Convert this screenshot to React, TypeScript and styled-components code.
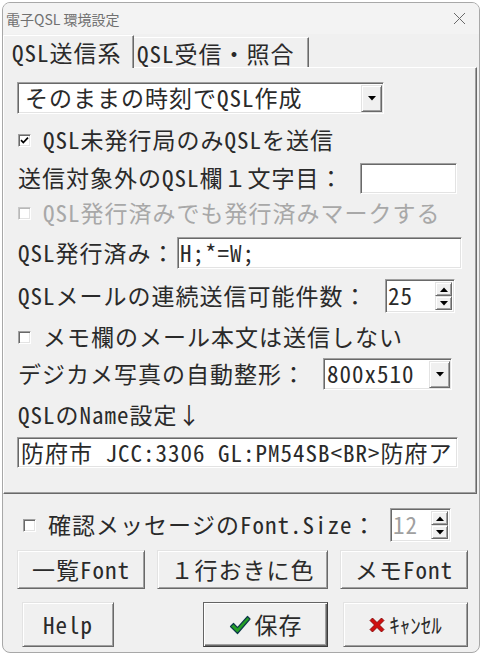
import React from "react";
import styled, { createGlobalStyle } from "styled-components";

const FONT = `"Noto Sans Mono CJK JP", "Noto Sans CJK JP", "Liberation Mono", monospace`;

const GlobalStyle = createGlobalStyle`
  html, body {
    margin: 0;
    padding: 0;
    background: #ffffff;
  }
  body {
    font-family: ${FONT};
  }
`;

const Window = styled.div`
  margin: 2px 0 0 2px;
  width: 478px;
  height: 651px;
  box-sizing: border-box;
  border: 1px solid #a8a8a8;
  border-radius: 8px;
  background: #f0f0f0;
  overflow: hidden;
  display: flex;
  flex-direction: column;
`;

const TitleBar = styled.div`
  height: 31px;
  display: flex;
  align-items: center;
  justify-content: space-between;
  padding: 0 13px 0 3px;
  background: #f3f3f3;
  font-family: "Noto Sans CJK JP", sans-serif;
  font-size: 14px;
  color: #707070;
`;

const TabStrip = styled.div`
  height: 33px;
  display: flex;
  align-items: flex-end;
  position: relative;
  z-index: 1;
`;

const Tab = styled.div<{ $active?: boolean; $w: number; $pl: number }>`
  box-sizing: border-box;
  width: ${(p) => p.$w}px;
  height: ${(p) => (p.$active ? 33 : 30)}px;
  margin-bottom: ${(p) => (p.$active ? -1 : 0)}px;
  padding-left: ${(p) => p.$pl}px;
  display: flex;
  align-items: center;
  font-size: 23px;
  letter-spacing: 1px;
  color: #2a2a2a;
  background: #f0f0f0;
  border-top: 1px solid #ffffff;
  border-left: ${(p) => (p.$active ? "1px solid #ffffff" : "none")};
  border-right: 1px solid #696969;
  box-shadow: inset -1px 0 0 #a0a0a0;
  white-space: nowrap;
`;

const Panel = styled.div`
  box-sizing: border-box;
  width: 474px;
  height: 427px;
  border-top: 1px solid #ffffff;
  border-left: 1px solid #ffffff;
  border-right: 1px solid #696969;
  border-bottom: 1px solid #696969;
  box-shadow: inset -1px -1px 0 #a0a0a0;
  padding-left: 13px;
  display: flex;
  flex-direction: column;
`;

const Row = styled.div<{ $top: number; $h: number; $w?: number }>`
  display: flex;
  align-items: center;
  margin-top: ${(p) => p.$top}px;
  height: ${(p) => p.$h}px;
  width: ${(p) => (p.$w ? `${p.$w}px` : "auto")};
  flex-shrink: 0;
`;

const Label = styled.span<{ $disabled?: boolean; $ml?: number }>`
  font-size: 23px;
  letter-spacing: 1px;
  line-height: 1.3;
  margin-left: ${(p) => p.$ml ?? 1}px;
  color: ${(p) => (p.$disabled ? "#a8a8a8" : "#2a2a2a")};
  white-space: nowrap;
`;

const Field = styled.div<{ $w: number; $h: number; $auto?: boolean }>`
  box-sizing: border-box;
  width: ${(p) => p.$w}px;
  height: ${(p) => p.$h}px;
  margin-left: ${(p) => (p.$auto ? "auto" : "0")};
  background: #ffffff;
  border-top: 1px solid #a0a0a0;
  border-left: 1px solid #a0a0a0;
  border-bottom: 1px solid #ffffff;
  border-right: 1px solid #ffffff;
  box-shadow: inset 1px 1px 0 #696969, inset -1px -1px 0 #e3e3e3;
  display: flex;
  align-items: center;
  flex-shrink: 0;
`;

const FieldText = styled.span<{ $pl: number; $disabled?: boolean }>`
  flex: 1;
  padding-left: ${(p) => p.$pl}px;
  font-size: 23px;
  letter-spacing: 1px;
  line-height: 1.2;
  white-space: nowrap;
  color: ${(p) => (p.$disabled ? "#a0a0a0" : "#2a2a2a")};
`;

const RaisedBox = styled.div<{ $w: number; $h: number }>`
  box-sizing: border-box;
  width: ${(p) => p.$w}px;
  height: ${(p) => p.$h}px;
  background: #f0f0f0;
  border-top: 1px solid #e3e3e3;
  border-left: 1px solid #e3e3e3;
  border-right: 1px solid #696969;
  border-bottom: 1px solid #696969;
  box-shadow: inset 1px 1px 0 #ffffff, inset -1px -1px 0 #a0a0a0;
  display: flex;
  align-items: center;
  justify-content: center;
  flex-shrink: 0;
`;

const DropButton = styled(RaisedBox)`
  margin-right: 1px;
`;

const SpinStack = styled.div`
  display: flex;
  flex-direction: column;
  margin-right: 2px;
`;

const CheckBox = styled.span<{ $disabled?: boolean }>`
  box-sizing: border-box;
  width: 13px;
  height: 13px;
  margin-left: 1px;
  margin-right: 11px;
  background: #ffffff;
  border-top: 1px solid ${(p) => (p.$disabled ? "#c8c8c8" : "#a0a0a0")};
  border-left: 1px solid ${(p) => (p.$disabled ? "#c8c8c8" : "#a0a0a0")};
  border-right: 1px solid #ffffff;
  border-bottom: 1px solid #ffffff;
  box-shadow: inset 1px 1px 0 ${(p) => (p.$disabled ? "#b8b8b8" : "#696969")},
    inset -1px -1px 0 #e3e3e3;
  display: flex;
  align-items: center;
  justify-content: center;
  flex-shrink: 0;
`;

const Bottom = styled.div`
  display: flex;
  flex-direction: column;
`;

const BottomRow = styled.div<{ $top: number; $h: number; $pl: number }>`
  display: flex;
  align-items: center;
  margin-top: ${(p) => p.$top}px;
  height: ${(p) => p.$h}px;
  padding-left: ${(p) => p.$pl}px;
`;

const Button = styled.div<{ $w: number; $h: number; $ml?: number; $default?: boolean }>`
  box-sizing: border-box;
  width: ${(p) => p.$w}px;
  height: ${(p) => p.$h}px;
  margin-left: ${(p) => p.$ml ?? 0}px;
  background: #f0f0f0;
  border-top: 1px solid ${(p) => (p.$default ? "#646464" : "#e3e3e3")};
  border-left: 1px solid ${(p) => (p.$default ? "#646464" : "#e3e3e3")};
  border-right: 1px solid ${(p) => (p.$default ? "#3c3c3c" : "#696969")};
  border-bottom: 1px solid ${(p) => (p.$default ? "#3c3c3c" : "#696969")};
  box-shadow: ${(p) =>
    p.$default
      ? "inset 1px 1px 0 #ffffff, inset -1px -1px 0 #696969, inset -2px -2px 0 #a0a0a0"
      : "inset 1px 1px 0 #ffffff, inset -1px -1px 0 #a0a0a0"};
  display: flex;
  align-items: center;
  justify-content: center;
  gap: 4px;
  font-size: 23px;
  letter-spacing: 1px;
  line-height: 1.2;
  color: #2a2a2a;
  white-space: nowrap;
  flex-shrink: 0;
`;

const SmallKana = styled.span`
  font-size: 21px;
  letter-spacing: 0;
`;

const DownArrow = () => (
  <svg width="8" height="5" viewBox="0 0 8 5">
    <path d="M0 0h8L4 4.5z" fill="#000" />
  </svg>
);

const UpArrow = () => (
  <svg width="8" height="5" viewBox="0 0 8 5">
    <path d="M0 5h8L4 0.5z" fill="#000" />
  </svg>
);

const Tick = () => (
  <svg width="9" height="9" viewBox="0 0 9 9">
    <path d="M1 4.2l2.3 2.4L8 1.6" fill="none" stroke="#000" strokeWidth="1.7" />
  </svg>
);

const CloseX = () => (
  <svg width="13" height="13" viewBox="0 0 13 13">
    <path d="M1 1l11 11M12 1L1 12" stroke="#6a6a6a" strokeWidth="1" />
  </svg>
);

const GreenCheck = () => (
  <svg width="22" height="20" viewBox="0 0 22 20">
    <path
      d="M1.5 11.5l3-3 4 4.2L18.5 1.5l2.5 2.5L8.5 18.5z"
      fill="#25a025"
      stroke="#0c3a4a"
      strokeWidth="1.2"
      strokeLinejoin="round"
    />
  </svg>
);

const RedCross = () => (
  <svg width="16" height="16" viewBox="0 0 16 16">
    <path
      d="M1 3.5L3.5 1 8 5.5 12.5 1 15 3.5 10.5 8 15 12.5 12.5 15 8 10.5 3.5 15 1 12.5 5.5 8z"
      fill="#d01010"
      stroke="#7a0000"
      strokeWidth="0.8"
      strokeLinejoin="round"
    />
  </svg>
);

const Combo: React.FC<{ w: number; h: number; text: string; pl: number; auto?: boolean }> = ({
  w,
  h,
  text,
  pl,
  auto,
}) => (
  <Field $w={w} $h={h} $auto={auto}>
    <FieldText $pl={pl}>{text}</FieldText>
    <DropButton $w={21} $h={h - 5}>
      <DownArrow />
    </DropButton>
  </Field>
);

const Spin: React.FC<{ w: number; h: number; text: string; disabled?: boolean; auto?: boolean }> = ({
  w,
  h,
  text,
  disabled,
  auto,
}) => (
  <Field $w={w} $h={h} $auto={auto}>
    <FieldText $pl={2} $disabled={disabled}>
      {text}
    </FieldText>
    <SpinStack>
      <RaisedBox $w={17} $h={14}>
        <UpArrow />
      </RaisedBox>
      <RaisedBox $w={17} $h={14}>
        <DownArrow />
      </RaisedBox>
    </SpinStack>
  </Field>
);

export default function App() {
  return (
    <>
      <GlobalStyle />
      <Window>
        <TitleBar>
          <span>電子QSL 環境設定</span>
          <CloseX />
        </TitleBar>
        <TabStrip>
          <Tab $active $w={131} $pl={8}>
            QSL送信系
          </Tab>
          <Tab $w={175} $pl={3}>
            QSL受信・照合
          </Tab>
        </TabStrip>
        <Panel>
          <Row $top={14} $h={32}>
            <Combo w={367} h={32} text="そのままの時刻でQSL作成" pl={7} />
          </Row>
          <Row $top={12} $h={28}>
            <CheckBox>
              <Tick />
            </CheckBox>
            <Label>QSL未発行局のみQSLを送信</Label>
          </Row>
          <Row $top={8} $h={32} $w={440}>
            <Label>送信対象外のQSL欄１文字目：</Label>
            <Field $w={97} $h={31} $auto />
          </Row>
          <Row $top={5} $h={28}>
            <CheckBox $disabled />
            <Label $disabled>QSL発行済みでも発行済みマークする</Label>
          </Row>
          <Row $top={10} $h={32} $w={445}>
            <Label>QSL発行済み：</Label>
            <Field $w={285} $h={32} $auto>
              <FieldText $pl={2}>H;*=W;</FieldText>
            </Field>
          </Row>
          <Row $top={10} $h={34} $w={438}>
            <Label>QSLメールの連続送信可能件数：</Label>
            <Spin w={70} h={34} text="25" auto />
          </Row>
          <Row $top={10} $h={28}>
            <CheckBox />
            <Label>メモ欄のメール本文は送信しない</Label>
          </Row>
          <Row $top={7} $h={32} $w={435}>
            <Label>デジカメ写真の自動整形：</Label>
            <Combo w={129} h={32} text="800x510" pl={3} auto />
          </Row>
          <Row $top={11} $h={28}>
            <Label>QSLのName設定↓</Label>
          </Row>
          <Row $top={8} $h={31}>
            <Field $w={441} $h={31}>
              <FieldText $pl={3}>防府市 JCC:3306 GL:PM54SB&lt;BR&gt;防府ア</FieldText>
            </Field>
          </Row>
        </Panel>
        <Bottom>
          <BottomRow $top={14} $h={34} $pl={19}>
            <CheckBox />
            <Label $ml={1}>確認メッセージのFont.Size：</Label>
            <Spin w={61} h={34} text="12" disabled auto />
            <span style={{ width: 28 }} />
          </BottomRow>
          <BottomRow $top={8} $h={39} $pl={14}>
            <Button $w={128} $h={39}>一覧Font</Button>
            <Button $w={171} $h={39} $ml={12}>
              １行おきに色
            </Button>
            <Button $w={128} $h={39} $ml={12}>
              メモFont
            </Button>
          </BottomRow>
          <BottomRow $top={13} $h={45} $pl={19}>
            <Button $w={92} $h={45}>Help</Button>
            <Button $w={125} $h={45} $ml={89} $default>
              <GreenCheck />
              保存
            </Button>
            <Button $w={125} $h={45} $ml={15}>
              <RedCross />
              <SmallKana>ｷｬﾝｾﾙ</SmallKana>
            </Button>
          </BottomRow>
        </Bottom>
      </Window>
    </>
  );
}
